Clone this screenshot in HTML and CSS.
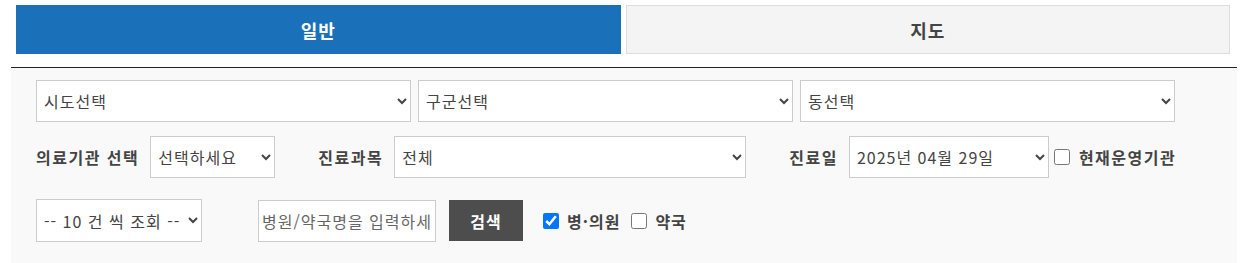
FILE: index.html
```html
<!DOCTYPE html>
<html lang="ko">
<head>
    <meta charset="UTF-8">
    <meta name="viewport" content="width=device-width, initial-scale=1.0">
    <title>병원/약국 찾기</title>
    <link rel="stylesheet" href="styles.css">
</head>
<body>
    <div class="tabs">
        <a class="tab active" href="#">일반</a>
        <a class="tab" href="#">지도</a>
    </div>

    <form class="search-box" id="searchForm">
        <div class="row row-area">
            <select class="sel-area">
                <option>시도선택</option>
            </select>
            <select class="sel-area">
                <option>구군선택</option>
            </select>
            <select class="sel-area">
                <option>동선택</option>
            </select>
        </div>

        <div class="row row-cond">
            <label class="lbl" for="orgType">의료기관 선택</label>
            <select id="orgType" class="sel-org">
                <option>선택하세요</option>
            </select>

            <label class="lbl lbl-dept" for="dept">진료과목</label>
            <select id="dept" class="sel-dept">
                <option>전체</option>
            </select>

            <label class="lbl lbl-date" for="day">진료일</label>
            <select id="day" class="sel-date">
                <option>2025년 04월 29일</option>
            </select>
            <label class="chk chk-open"><input type="checkbox">현재운영기관</label>
        </div>

        <div class="row row-keyword">
            <select class="sel-count">
                <option>-- 10 건 씩 조회 --</option>
            </select>
            <input type="text" class="keyword" placeholder="병원/약국명을 입력하세요">
            <button type="submit" class="btn-search">검색</button>
            <label class="chk"><input type="checkbox" checked>병·의원</label>
            <label class="chk"><input type="checkbox">약국</label>
        </div>
    </form>
</body>
</html>
```

FILE: styles.css
```css
body {
    font-family: "Noto Sans CJK KR", "Noto Sans", sans-serif;
    margin: 0;
    padding: 5px 12px 0 11px;
    background-color: #fff;
    color: #333;
    font-size: 16px;
    letter-spacing: 1px;
}
.tabs {
    display: flex;
    gap: 5px;
    padding: 0 7px 0 5px;
    margin-bottom: 13px;
}
.tab {
    flex: 1;
    height: 47px;
    display: flex;
    align-items: center;
    justify-content: center;
    text-decoration: none;
    font-size: 18px;
    font-weight: bold;
    letter-spacing: 1px;
    color: #444;
    background-color: #f4f4f4;
    border: 1px solid #ddd;
}
.tab.active {
    background-color: #1a71ba;
    border-color: #1a71ba;
    color: #fff;
}
.search-box {
    border-top: 1px solid #222;
    background-color: #f9f9f9;
    padding: 12px 25px 22px;
}
.row {
    display: flex;
    align-items: center;
}
.row-area {
    gap: 7px;
    margin-bottom: 14px;
}
.row-cond {
    margin-bottom: 21px;
}
select, input[type="text"] {
    font-family: inherit;
    font-size: 16px;
    letter-spacing: 1px;
    color: #444;
    background-color: #fff;
    border: 1px solid #ccc;
    border-radius: 0;
    height: 42px;
    padding: 0 3px;
}
.sel-area {
    width: 375px;
}
.lbl {
    font-weight: bold;
    color: #444;
    letter-spacing: 1.5px;
    margin-right: 11px;
}
.sel-org {
    width: 125px;
}
.lbl-dept {
    margin-left: 43px;
}
.sel-dept {
    width: 352px;
}
.lbl-date {
    margin-left: 43px;
}
.sel-date {
    width: 200px;
}
.chk {
    display: flex;
    align-items: center;
    font-weight: bold;
    color: #444;
    letter-spacing: 1.5px;
}
.chk input {
    width: 16px;
    height: 16px;
    margin: 0 9px 0 0;
}
.chk-open {
    margin-left: 5px;
}
.sel-count {
    width: 166px;
    height: 43px;
}
.keyword {
    width: 178px;
    height: 39px;
    margin-left: 56px;
    box-sizing: border-box;
    padding: 0 4px;
    font-size: 15px;
}
.keyword::placeholder {
    color: #666;
}
.btn-search {
    width: 74px;
    height: 41px;
    margin-left: 13px;
    border: none;
    background-color: #4d4d4d;
    color: #fff;
    font-family: inherit;
    font-size: 16px;
    letter-spacing: 1px;
    font-weight: bold;
    cursor: pointer;
}
.row-keyword .chk {
    margin-left: 20px;
    letter-spacing: 1px;
}
.row-keyword .chk input {
    margin-right: 8px;
}
.row-keyword .chk + .chk {
    margin-left: 11px;
}
```
